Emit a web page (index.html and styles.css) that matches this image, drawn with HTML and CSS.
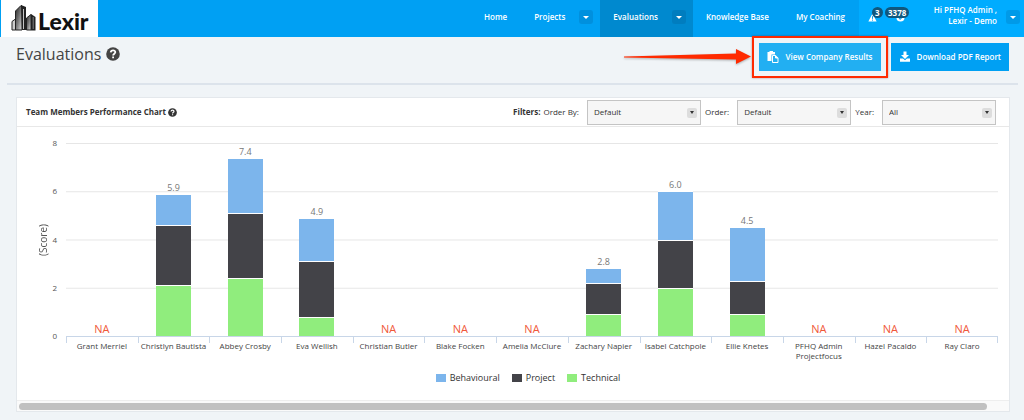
FILE: index.html
```html
<!DOCTYPE html>
<html lang="en">
<head>
<meta charset="utf-8">
<title>Evaluations</title>
<link rel="stylesheet" href="styles.css">
</head>
<body>
<header class="topbar">
  <a class="logo" href="#" aria-label="Lexir home">
    <svg class="logo-mark" viewBox="0 0 26 28" aria-hidden="true">
      <defs><linearGradient id="steel" x1="0" y1="0" x2="1" y2="1"><stop offset="0" stop-color="#222"/><stop offset=".5" stop-color="#777"/><stop offset="1" stop-color="#ddd"/></linearGradient></defs>
      <path d="M1 17.500L4.500 15V26H1Z" fill="#ccc" stroke="#222"/>
      <path d="M4.500 7L10 1.500L11 2V26H4.500Z" fill="url(#steel)" stroke="#222"/>
      <path d="M10 1L15 3V26H11Z" fill="#222"/>
      <path d="M12.500 5V25" stroke="#eee" stroke-width=".8"/>
      <path d="M15.500 14L20 10.500V26H15.500Z" fill="url(#steel)" stroke="#222"/>
      <path d="M20 10L24.500 13V26.500H20Z" fill="#222"/>
      <path d="M22.200 13V25" stroke="#aaa" stroke-width=".7"/>
    </svg>
    <span class="logo-text">Lexir</span>
  </a>
  <nav class="menu">
    <a class="item" href="#">Home</a>
    <div class="group"><a class="item" href="#">Projects</a><button class="caret" aria-label="Projects menu"></button></div>
    <div class="group active"><a class="item" href="#">Evaluations</a><button class="caret" aria-label="Evaluations menu"></button></div>
    <a class="item" href="#">Knowledge Base</a>
    <a class="item" href="#">My Coaching</a>
  </nav>
  <div class="account">
    <button class="notice" aria-label="Alerts"><svg viewBox="0 0 10 10"><path d="M5 .5L9.600 9.500H.4Z" fill="#fff"/><path d="M5 3.500V6.500M5 7.300V8.500" stroke="#0a9ee8" stroke-width="1.100"/></svg><span class="badge">3</span></button>
    <button class="notice wide" aria-label="Tasks"><svg viewBox="0 0 10 10"><circle cx="5" cy="5" r="4.500" fill="#fff"/><path d="M3 5L4.600 7L7.500 4" fill="none" stroke="#0a9ee8" stroke-width="1.200"/></svg><span class="badge">3378</span></button>
    <div class="user">Hi PFHQ Admin ,<br>Lexir - Demo</div>
    <button class="caret" aria-label="Account menu"></button>
  </div>
</header>
<main>
  <div class="heading">
    <h1>Evaluations <svg class="help" viewBox="0 0 14 14" aria-hidden="true"><circle cx="7" cy="7" r="6.800" fill="#444"/><path d="M4.700 5.400C4.900 2.600 9.500 2.700 9.300 5.300C9.200 6.700 7.100 6.800 7.100 8.600M7.100 9.600V11.300" fill="none" stroke="#fff" stroke-width="1.800"/></svg></h1>
    <svg class="arrow" viewBox="0 0 128 18" aria-hidden="true"><path d="M1 8.500L113 5.500V1L128 8.500L113 16V11.500L1 9.500Z" fill="#ff2a00"/></svg>
    <div class="callout"><button class="action light"><svg viewBox="0 0 12 12" aria-hidden="true"><path d="M.5 1H2.500V0H6V1H8V3.500H4.500V10H.5Z" fill="#fff"/><path d="M5.500 4.500H8.500V7H11V11.500H5.500Z" fill="none" stroke="#fff"/><path d="M8.500 4L11.500 7H8.500Z" fill="#fff"/></svg>View Company Results</button></div>
    <button class="action"><svg viewBox="0 0 12 12" aria-hidden="true"><path d="M4.500 0.500H7.500V4H10L6 8L2 4H4.500Z" fill="#fff"/><path d="M1 7.500H4L6 9.300L8 7.500H11V10.800H1Z" fill="#fff"/></svg>Download PDF Report</button>
  </div>
  <section class="panel">
    <div class="panel-head">
      <h2>Team Members Performance Chart <svg class="help" viewBox="0 0 14 14" aria-hidden="true"><circle cx="7" cy="7" r="6.800" fill="#333"/><path d="M4.700 5.400C4.900 2.600 9.500 2.700 9.300 5.300C9.200 6.700 7.100 6.800 7.100 8.600M7.100 9.600V11.300" fill="none" stroke="#fff" stroke-width="1.800"/></svg></h2>
      <form class="filters">
        <b>Filters:</b>
        <label for="by">Order By:</label><span class="pick"><select id="by"><option>Default</option></select></span>
        <label for="order">Order:</label><span class="pick"><select id="order"><option>Default</option></select></span>
        <label for="year">Year:</label><span class="pick"><select id="year"><option>All</option></select></span>
      </form>
    </div>
    <div class="chart">
      <div class="axis-title"><span>(Score)</span></div>
      <div class="scale"><span>8</span><span>6</span><span>4</span><span>2</span><span>0</span></div>
      <div class="columns">
        <div class="col"><div class="plot"><span class="na">NA</span></div><div class="name">Grant Merriel</div></div>
        <div class="col"><div class="plot"><span class="total">5.9</span><i class="b" style="height:16.250%"></i><i class="p" style="height:31.250%"></i><i class="t" style="height:26.250%"></i></div><div class="name">Christlyn Bautista</div></div>
        <div class="col"><div class="plot"><span class="total">7.4</span><i class="b" style="height:28.750%"></i><i class="p" style="height:33.750%"></i><i class="t" style="height:30%"></i></div><div class="name">Abbey Crosby</div></div>
        <div class="col"><div class="plot"><span class="total">4.9</span><i class="b" style="height:22.500%"></i><i class="p" style="height:28.750%"></i><i class="t" style="height:10%"></i></div><div class="name">Eva Wellish</div></div>
        <div class="col"><div class="plot"><span class="na">NA</span></div><div class="name">Christian Butler</div></div>
        <div class="col"><div class="plot"><span class="na">NA</span></div><div class="name">Blake Focken</div></div>
        <div class="col"><div class="plot"><span class="na">NA</span></div><div class="name">Amelia McClure</div></div>
        <div class="col"><div class="plot"><span class="total">2.8</span><i class="b" style="height:7.500%"></i><i class="p" style="height:16.250%"></i><i class="t" style="height:11.250%"></i></div><div class="name">Zachary Napier</div></div>
        <div class="col"><div class="plot"><span class="total">6.0</span><i class="b" style="height:25%"></i><i class="p" style="height:25%"></i><i class="t" style="height:25%"></i></div><div class="name">Isabel Catchpole</div></div>
        <div class="col"><div class="plot"><span class="total">4.5</span><i class="b" style="height:27.500%"></i><i class="p" style="height:17.500%"></i><i class="t" style="height:11.250%"></i></div><div class="name">Ellie Knetes</div></div>
        <div class="col"><div class="plot"><span class="na">NA</span></div><div class="name">PFHQ Admin Projectfocus</div></div>
        <div class="col"><div class="plot"><span class="na">NA</span></div><div class="name">Hazel Pacaldo</div></div>
        <div class="col"><div class="plot"><span class="na">NA</span></div><div class="name">Ray Claro</div></div>
      </div>
    </div>
    <div class="legend"><span><i class="b"></i>Behavioural</span><span><i class="p"></i>Project</span><span><i class="t"></i>Technical</span></div>
    <div class="track"><div class="thumb"></div></div>
  </section>
</main>
</body>
</html>
```

FILE: styles.css
```css
* { box-sizing: border-box; }
body { margin: 0; background: #f0f4f7; color: #333; font: 8px/12px "Open Sans", sans-serif; }
button { border: 0; padding: 0; font: inherit; color: inherit; background: none; }
a { color: inherit; text-decoration: none; }
h1, h2 { margin: 0; }

.topbar { display: flex; height: 37px; padding-left: 1px; background: #00a0f3; color: #fff; font-weight: 600; }
.logo { display: flex; align-items: center; width: 97px; padding-left: 10px; background: #fff; color: #111; }
.logo-mark { width: 26px; height: 28px; margin-bottom: 2px; }
.logo-text { font: 900 23px/24px Lato, sans-serif; padding-top: 4px; margin-left: 1px; }
.menu { display: flex; margin-left: auto; }
.item { display: flex; align-items: center; padding: 0 14px 3px 13px; }
.group { display: flex; align-items: center; padding-right: 7px; }
.group .item { height: 100%; }
.active { background: #0089cf; }
.caret { display: grid; place-items: center; width: 14px; height: 14px; border-radius: 3px; background: rgba(0, 60, 110, .16); margin-bottom: 3px; }
.caret::before { content: ""; border: 3px solid transparent; border-top-color: #fff; border-bottom: 0; }
.account { display: flex; align-items: center; width: 165px; padding-left: 9px; background: #00acff; }
.notice { position: relative; width: 9px; height: 9px; margin: 0 19px 2px 0; }
.notice svg { display: block; width: 9px; height: 9px; }
.badge { position: absolute; left: 4px; bottom: 4px; padding: 0 3px; border-radius: 6px; background: #10577d; font-weight: 700; line-height: 11px; }
.wide { margin-right: 0; }
.wide .badge { left: -11px; }
.user { margin-left: auto; margin-bottom: 7px; padding-right: 9px; line-height: 11px; text-align: right; }
.account .caret { margin-right: 4px; }

.heading { display: flex; height: 48px; margin: 0 6px 12px 7px; padding: 0 9px 6px; align-items: center; border-bottom: 2px solid #dce3eb; }
h1 { display: flex; align-items: center; gap: 5px; font-size: 16px; line-height: 20px; font-weight: 400; margin: 0 auto 6px 0; color: #444; }
.help { width: 14px; height: 14px; }
.arrow { width: 128px; height: 18px; margin-right: 1px; filter: drop-shadow(0 1px 1px rgba(0, 0, 0, .3)); }
.callout { margin: 0 3px 0 0; padding: 5px; border: 2px solid #ff2a00; box-shadow: 0 0 2px rgba(80, 0, 0, .4); }
.action { display: flex; align-items: center; gap: 6px; height: 28px; padding: 0 8px; background: #00a0f3; color: #fff; font-weight: 600; }
.action svg { width: 12px; height: 12px; }
.light { background: #22aff2; }

.panel { margin: 0 14px 0 16px; border: 1px solid #e4e8ec; background: #fff; }
.panel-head { display: flex; align-items: center; justify-content: space-between; height: 29px; padding: 0 13px 0 9px; border-bottom: 1px solid #e8e8e8; }
h2 { display: flex; align-items: center; gap: 2px; font-size: 8px; line-height: 12px; font-weight: 700; }
h2 .help { width: 9px; height: 9px; }
.filters { display: flex; align-items: center; }
.filters b { margin-right: 3px; }
.filters label { margin-right: 8px; }
.pick { position: relative; margin-right: 4px; }
.pick:last-child { margin-right: 0; }
.pick::before { content: ""; position: absolute; right: 4px; top: 8px; width: 10px; height: 10px; border-radius: 2px; background: #ddd; pointer-events: none; }
.pick::after { content: ""; position: absolute; right: 7px; top: 11px; border: 2px solid transparent; border-top: 3px solid #333; border-bottom: 0; pointer-events: none; }
select { display: block; appearance: none; width: 114px; height: 25px; padding: 0 6px; border: 1px solid #c4c4c4; border-radius: 0; background: #f6f6f6; color: #333; font: inherit; }

.chart { display: grid; grid-template-columns: 34px 14px 1fr; padding: 16px 11px 0 1px; }
.axis-title { display: grid; place-items: center; height: 193px; padding-left: 16px; }
.axis-title span { writing-mode: vertical-rl; transform: rotate(180deg); font-size: 10px; color: #555; }
.scale { display: flex; flex-direction: column; justify-content: space-between; height: 205px; margin-top: -6px; padding-right: 9px; text-align: right; color: #555; }
.columns { display: grid; grid-template-columns: repeat(13, minmax(0, 1fr)); }
.plot { display: flex; flex-direction: column; justify-content: flex-end; align-items: center; height: 194px; border-bottom: 1px solid #c8d6e8; background: linear-gradient(#e6e6e6 1px, transparent 1px) 0 0 / 100% 25%; }
.plot i { width: 35px; border-top: 1px solid #fff; }
.plot i, .legend i { flex-shrink: 0; }
.b { background: #7cb5ec; }
.p { background: #434348; }
.t { background: #90ed7d; }
.total { font-size: 9px; color: #777; }
.na { font-size: 11px; color: #f0583a; margin-bottom: 1px; }
.name { height: 26px; padding-top: 4px; text-align: center; line-height: 10px; color: #444; background: linear-gradient(#c8d6e8, #c8d6e8) 0 0 / 1px 6px no-repeat; }
.col:last-child .name { background: linear-gradient(#c8d6e8, #c8d6e8) 0 0 / 1px 6px no-repeat, linear-gradient(#c8d6e8, #c8d6e8) 100% 0 / 1px 6px no-repeat; }
.legend { display: flex; justify-content: center; gap: 12px; padding-left: 30px; margin-top: 9px; font-size: 9px; }
.legend span { display: flex; align-items: center; gap: 4px; }
.legend i { width: 10px; height: 8px; }
.track { height: 11px; margin-top: 16px; padding: 2px 22px 0 2px; border-top: 1px solid #eee; background: #fafafa; }
.thumb { height: 7px; border-radius: 4px; background: #c1c1c1; }
```
